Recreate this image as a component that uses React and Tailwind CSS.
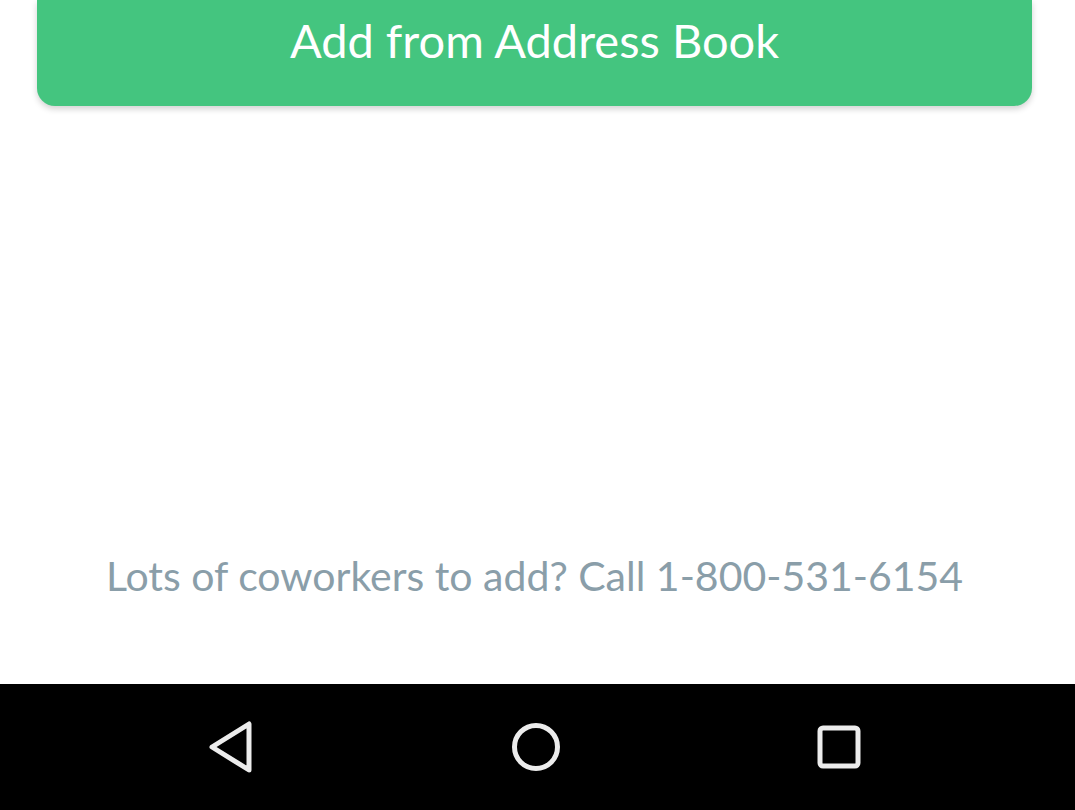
import React from 'react';

const NavBar = () => (
  <div className="h-[126px] bg-black flex items-center justify-center gap-[250px] pr-[6px]">
    <svg width="52" height="56" viewBox="0 0 52 56">
      <path d="M43 5 L43 51 L6 28 Z" fill="none" stroke="#ececec" strokeWidth="5" strokeLinejoin="round" />
    </svg>
    <svg width="56" height="56" viewBox="0 0 56 56">
      <circle cx="28" cy="28" r="21.5" fill="none" stroke="#ececec" strokeWidth="5" />
    </svg>
    <svg width="50" height="50" viewBox="0 0 50 50">
      <rect x="6" y="6" width="38" height="38" rx="3" fill="none" stroke="#ececec" strokeWidth="5" />
    </svg>
  </div>
);

const App = () => {
  return (
    <div className="h-[810px] w-full flex flex-col bg-white overflow-hidden" style={{ fontFamily: 'Lato, "Open Sans", sans-serif' }}>
      <div className="pl-[37px] pr-[43px]">
        <button className="w-full h-[106px] bg-[#44c57f] rounded-b-[18px] shadow-[0_3px_6px_rgba(0,0,0,0.18)] flex justify-center pt-[12px]">
          <span className="text-white text-[47px] leading-[56px]">Add from Address Book</span>
        </button>
      </div>
      <div className="flex-1 flex flex-col justify-end items-center pb-[84px]">
        <p className="text-[#8a9ea9] text-[41px] leading-[48px] pr-[6px]">Lots of coworkers to add? Call 1-800-531-6154</p>
      </div>
      <NavBar />
    </div>
  );
};

export default App;
